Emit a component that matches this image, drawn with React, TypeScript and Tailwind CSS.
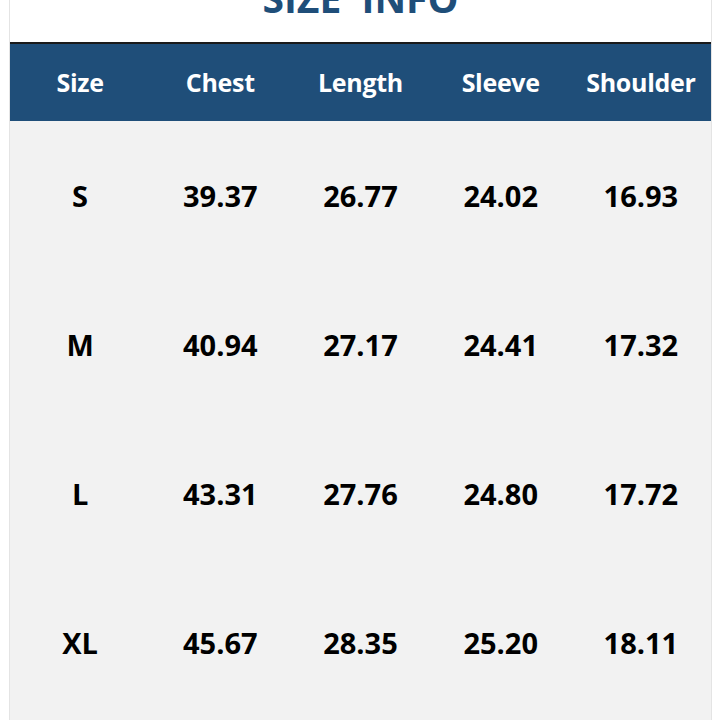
const headers = ['Size', 'Chest', 'Length', 'Sleeve', 'Shoulder'];

const rows = [
  ['S', '39.37', '26.77', '24.02', '16.93'],
  ['M', '40.94', '27.17', '24.41', '17.32'],
  ['L', '43.31', '27.76', '24.80', '17.72'],
  ['XL', '45.67', '28.35', '25.20', '18.11'],
];

export default function App() {
  return (
    <div className="w-[720px] h-[720px] overflow-hidden bg-white font-['Open_Sans',sans-serif]">
      <div className="ml-[9px] w-[703px] border-x border-[#e4e4e4]">
        {/* Title, cut off at the top */}
        <div className="h-[42px] overflow-hidden flex justify-center">
          <h1 className="-mt-[27px] text-[39px] leading-[50px] font-bold text-[#1f4e79] whitespace-pre">
            SIZE  INFO
          </h1>
        </div>

        {/* Header */}
        <div className="border-t-2 border-[#1a1a1a] bg-[#1f4e79] h-[79px] grid grid-cols-5 items-center">
          {headers.map(h => (
            <div key={h} className="text-center text-white font-bold text-[25px] tracking-[-0.3px]">
              {h}
            </div>
          ))}
        </div>

        {/* Body */}
        <div className="bg-[#f2f2f2] h-[620px]">
          {rows.map(r => (
            <div key={r[0]} className="grid grid-cols-5 items-center h-[149px]">
              {r.map((c, i) => (
                <div key={i} className="text-center text-black font-bold text-[29px]">
                  {c}
                </div>
              ))}
            </div>
          ))}
        </div>
      </div>
    </div>
  );
}
